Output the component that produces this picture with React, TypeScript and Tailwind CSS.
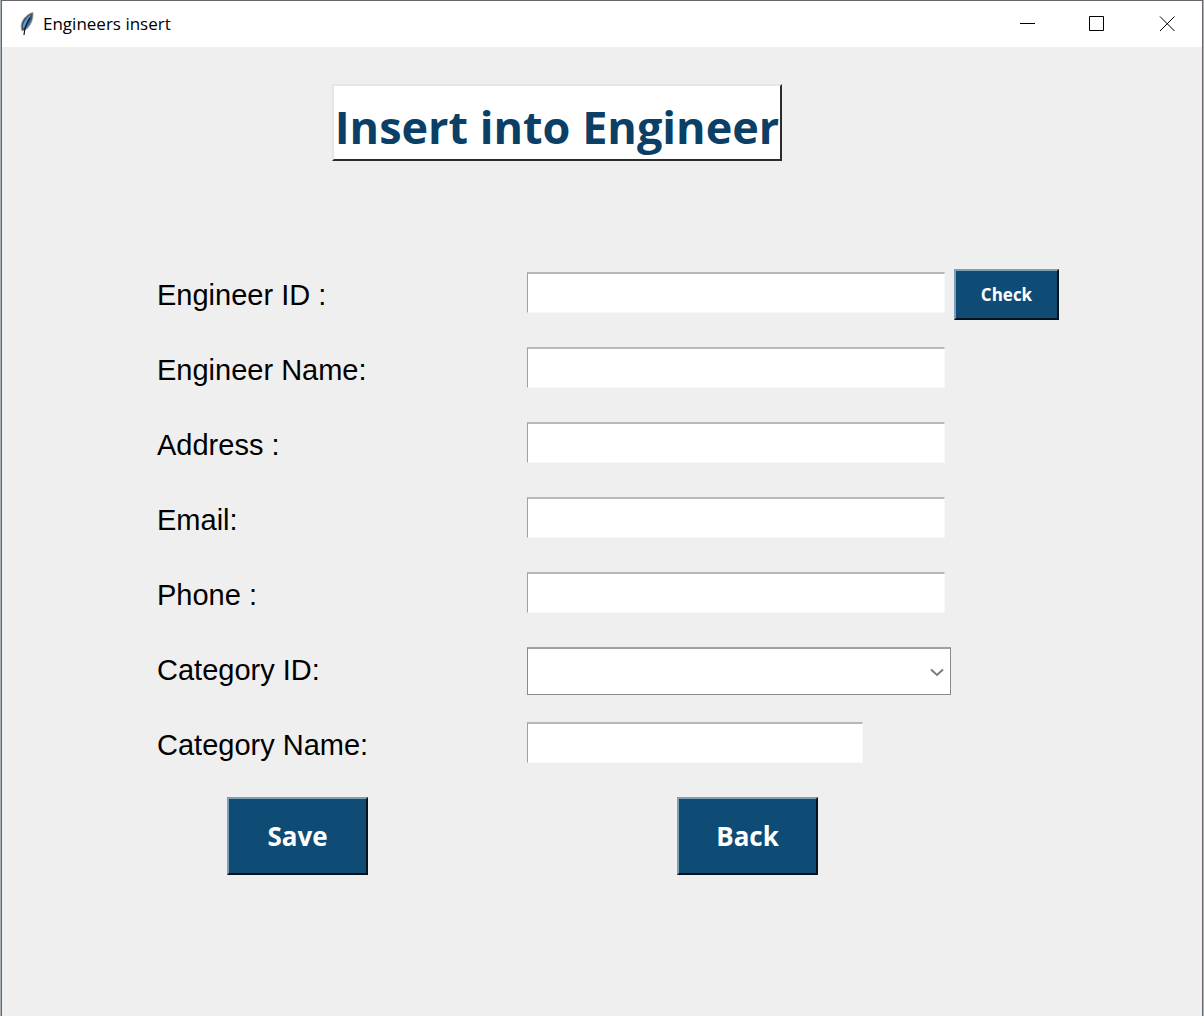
import type { ReactNode } from 'react';

const textFields = [
  { id: 'engineer-name', label: 'Engineer Name:' },
  { id: 'address', label: 'Address :' },
  { id: 'email', label: 'Email:' },
  { id: 'phone', label: 'Phone :' },
];

function FeatherIcon() {
  return (
    <svg className="h-6 w-4 shrink-0" viewBox="0 0 16 24" aria-hidden="true">
      <path d="M14 .5C9 1.500 3.500 6.500 2.300 12.500c-.4 2.300 0 4.500.7 6.500l4.500-2C11.500 13 14.500 8 14 .5Z" fill="#454b54" stroke="#a3a6aa" strokeWidth="1" />
      <path d="M12 2.500C8 5 4.500 9.500 3.700 15l1 1.500C7.500 11.500 10.500 7.500 12 2.500Z" fill="#5b9be0" />
      <path d="M12.800 5c0 4.500-2.300 9-5.500 11.500l-1.600.3C9 13 11.500 9.500 12.800 5Z" fill="#3f7cc8" />
      <path d="M11 5.500C8 10 5.500 15 5 23" fill="none" stroke="#10151c" strokeWidth="1.200" />
    </svg>
  );
}

function TitleBar() {
  return (
    <header className="flex h-[46px] items-center bg-white">
      <div className="flex grow items-center gap-2 pl-[17px]">
        <FeatherIcon />
        <span className="font-['Open_Sans',sans-serif] text-[17px] leading-6 text-black">Engineers insert</span>
      </div>
      <div className="flex h-full">
        <button type="button" aria-label="Minimize" className="grid w-[70px] place-items-center">
          <svg className="h-4 w-4" viewBox="0 0 16 16" stroke="#000" fill="none"><path d="M1 7.500h15" /></svg>
        </button>
        <button type="button" aria-label="Maximize" className="grid w-[70px] place-items-center">
          <svg className="h-4 w-4" viewBox="0 0 16 16" stroke="#000" fill="none"><path d="M.5.500h14v14h-14Z" /></svg>
        </button>
        <button type="button" aria-label="Close" className="grid w-[70px] place-items-center">
          <svg className="h-4 w-4" viewBox="0 0 16 16" stroke="#000" fill="none"><path d="m1 .500 14.500 14.500M15.500 .5 1 15" /></svg>
        </button>
      </div>
    </header>
  );
}

function Row({ id, label, children }: { id: string; label: string; children: ReactNode }) {
  return (
    <div className="grid h-[52px] grid-cols-[370px_1fr] items-start">
      <label htmlFor={id} className="pt-2 font-['Liberation_Sans',Arial,sans-serif] text-[29px] leading-[38px] text-black">
        {label}
      </label>
      <div className="flex items-start">{children}</div>
    </div>
  );
}

const entry =
  'mt-1 h-[41px] border-t-2 border-l border-r border-b border-t-[#b8b8b8] border-l-[#a0a0a0] border-r-[#f8f8f8] border-b-[#f8f8f8] bg-white px-2 text-2xl outline-none';
const raised =
  "border-2 border-t-[#7f9fb5] border-l-[#7f9fb5] border-r-[#05121c] border-b-[#05121c] bg-[#0f4c75] font-['Open_Sans',sans-serif] font-bold text-white";

export default function App() {
  return (
    <div className="flex min-h-screen flex-col border-r border-l border-[#a9b0b5] bg-[#efefef]">
      <div className="flex grow flex-col border-t border-r border-l border-[#66666c]">
        <TitleBar />
        <main className="pt-[37px] pl-[155px]">
          <h1 className="ml-[175px] w-[450px] border-2 border-t-[#e6e6e6] border-r-[#2b2b2b] border-b-[#2b2b2b] border-l-[#e6e6e6] bg-white pt-2 text-center font-['Open_Sans',sans-serif] text-[45px] leading-[65px] font-bold whitespace-nowrap text-[#0b3f66]">
            Insert into Engineer
          </h1>
          <form className="mt-[107px]" onSubmit={(e) => e.preventDefault()}>
            <div className="flex flex-col gap-[23px]">
              <Row id="engineer-id" label="Engineer ID :">
                <input id="engineer-id" type="text" className={`${entry} w-[418px]`} />
                <button type="button" className={`${raised} mt-px ml-[9px] h-[51px] w-[105px] text-[17px]`}>
                  Check
                </button>
              </Row>
              {textFields.map((f) => (
                <Row key={f.id} id={f.id} label={f.label}>
                  <input id={f.id} type="text" className={`${entry} w-[418px]`} />
                </Row>
              ))}
              <Row id="category-id" label="Category ID:">
                <div className="relative mt-1">
                  <select id="category-id" className="block h-12 w-[424px] appearance-none border border-t-2 border-[#8a8a8a] border-t-[#a0a0a0] bg-white px-2 text-2xl outline-none">
                    <option value="" />
                  </select>
                  <svg className="pointer-events-none absolute top-5 right-1.5 h-3 w-4" viewBox="0 0 16 12" fill="none" stroke="#7b7b7b" strokeWidth="2" aria-hidden="true">
                    <path d="m2 2.500 6 5.500 6-5.500" />
                  </svg>
                </div>
              </Row>
              <Row id="category-name" label="Category Name:">
                <input id="category-name" type="text" className={`${entry} w-[336px]`} />
              </Row>
            </div>
            <div className="mt-[27px] flex gap-[309px] pl-[70px]">
              <button type="submit" className={`${raised} h-[78px] w-[141px] text-[26px]`}>
                Save
              </button>
              <button type="button" className={`${raised} h-[78px] w-[141px] text-[26px]`}>
                Back
              </button>
            </div>
          </form>
        </main>
      </div>
    </div>
  );
}
